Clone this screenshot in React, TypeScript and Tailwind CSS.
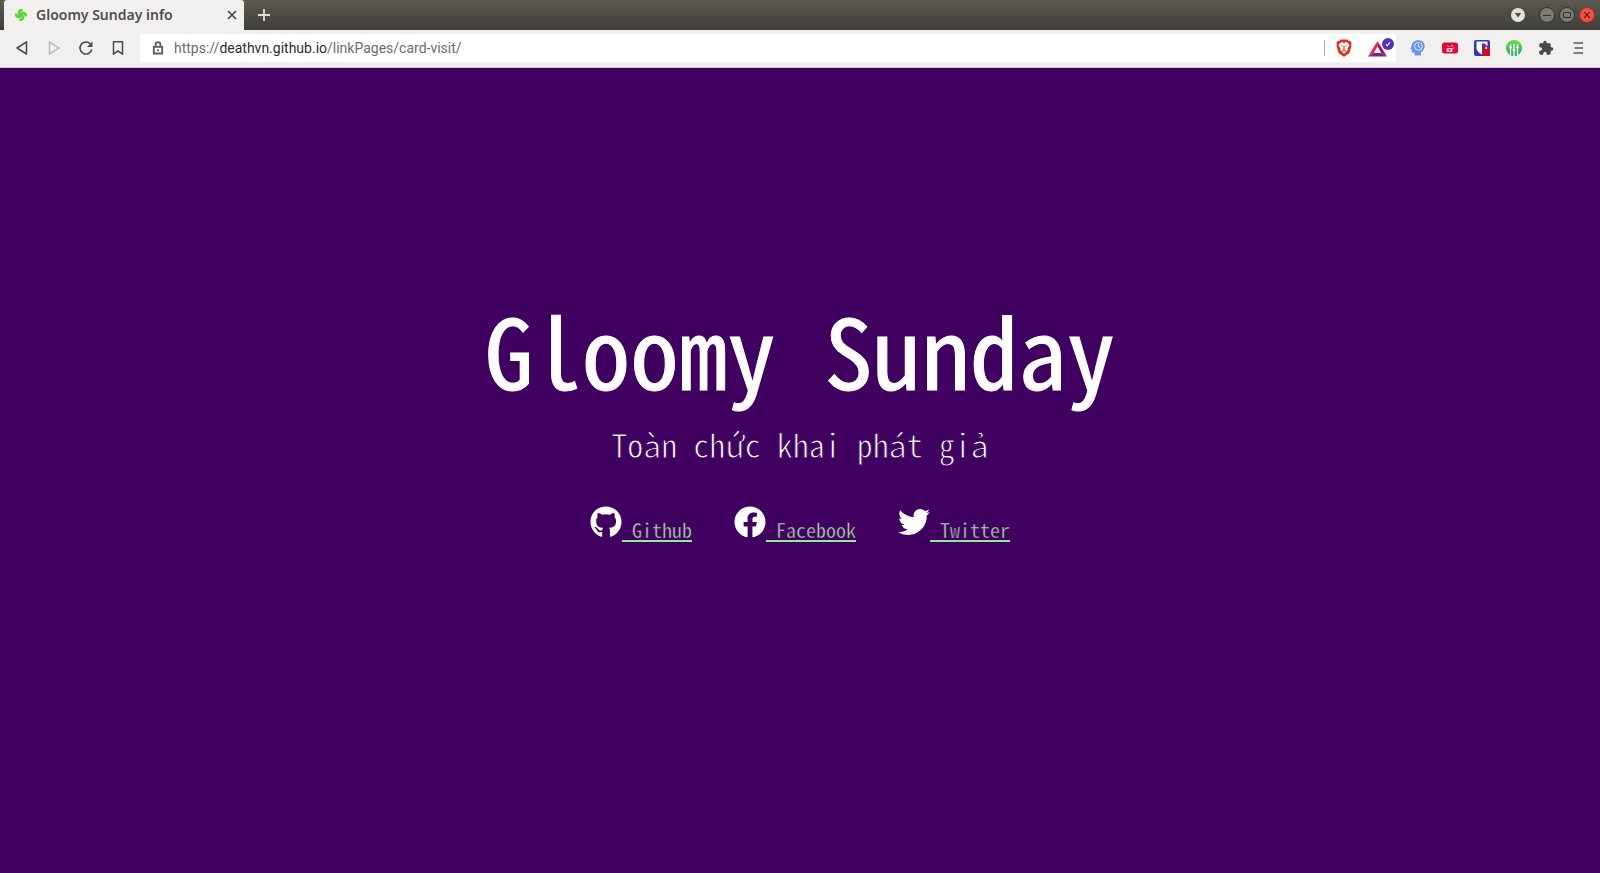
import React from "react";

const links = [
  {
    label: "Github",
    href: "https://github.com/",
    viewBox: "0 0 496 512",
    path: "M165.900 397.400c0 2-2.300 3.600-5.200 3.600-3.300.3-5.600-1.300-5.600-3.600 0-2 2.300-3.600 5.200-3.600 3-.3 5.600 1.300 5.600 3.600zm-31.100-4.500c-.7 2 1.300 4.300 4.300 4.900 2.600 1 5.600 0 6.200-2s-1.300-4.300-4.300-5.200c-2.600-.7-5.500.3-6.200 2.300zm44.200-1.700c-2.900.7-4.900 2.600-4.600 4.900.3 2 2.900 3.300 5.900 2.600 2.900-.7 4.900-2.600 4.600-4.600-.3-1.900-3-3.200-5.900-2.900zM244.800 8C106.100 8 0 113.300 0 252c0 110.900 69.800 205.800 169.500 239.200 12.800 2.300 17.300-5.600 17.300-12.100 0-6.200-.3-40.400-.3-61.400 0 0-70 15-84.700-29.800 0 0-11.400-29.100-27.800-36.600 0 0-22.900-15.700 1.600-15.400 0 0 24.900 2 38.600 25.800 21.900 38.600 58.600 27.500 72.900 20.900 2.300-16 8.800-27.100 16-33.700-55.900-6.200-112.300-14.300-112.300-110.500 0-27.500 7.600-41.300 23.600-58.900-2.600-6.500-11.100-33.300 2.600-67.900 20.900-6.500 69 27 69 27 20-5.600 41.500-8.500 62.800-8.500s42.800 2.900 62.800 8.500c0 0 48.100-33.600 69-27 13.700 34.700 5.200 61.400 2.600 67.900 16 17.700 25.800 31.500 25.800 58.900 0 96.500-58.900 104.200-114.800 110.500 9.200 7.900 17 22.900 17 46.400 0 33.700-.3 75.400-.3 83.600 0 6.500 4.600 14.400 17.300 12.100C428.200 457.800 496 362.900 496 252 496 113.300 383.500 8 244.800 8z",
  },
  {
    label: "Facebook",
    href: "https://www.facebook.com/",
    viewBox: "0 0 512 512",
    path: "M504 256C504 119 393 8 256 8S8 119 8 256c0 123.780 90.690 226.380 209.250 245V327.690h-63V256h63v-54.640c0-62.150 37-96.480 93.670-96.480 27.140 0 55.520 4.840 55.520 4.840v61h-31.280c-30.800 0-40.410 19.120-40.410 38.730V256h68.780l-11 71.690h-57.780V501C413.310 482.380 504 379.780 504 256z",
  },
  {
    label: "Twitter",
    href: "https://twitter.com/",
    viewBox: "0 0 512 512",
    path: "M459.370 151.716c.325 4.548.325 9.097.325 13.645 0 138.720-105.583 298.558-298.558 298.558-59.452 0-114.680-17.219-161.137-47.106 8.447.974 16.568 1.299 25.340 1.299 49.055 0 94.213-16.568 130.274-44.832-46.132-.975-84.792-31.188-98.112-72.772 6.498.974 12.995 1.624 19.818 1.624 9.421 0 18.843-1.300 27.614-3.573-48.081-9.747-84.143-51.980-84.143-102.985v-1.299c13.969 7.797 30.214 12.670 47.431 13.319-28.264-18.843-46.781-51.005-46.781-87.391 0-19.492 5.197-37.360 14.294-52.954 51.655 63.675 129.300 105.258 216.365 109.807-1.624-7.797-2.599-15.918-2.599-24.040 0-57.828 46.782-104.934 104.934-104.934 30.213 0 57.502 12.670 76.670 33.137 23.715-4.548 46.456-13.320 66.599-25.340-7.798 24.366-24.366 44.833-46.132 57.827 21.117-2.273 41.584-8.122 60.426-16.243-14.292 20.791-32.161 39.308-52.628 54.253z",
  },
];

function TabStrip() {
  return (
    <header className="flex h-[30px] items-stretch bg-linear-to-b from-[#5c5950] to-[#3f3d37] pl-1 pr-[5px]">
      <div className="flex w-60 items-center rounded-t-[3px] bg-[#f2f0ee] pl-[10px] pr-[6px]">
        <svg viewBox="0 0 14 14" className="mr-2 size-[14px]" fill="none" stroke="#5bd640" strokeWidth="2.800">
          <path d="M7 8C4.500 6 4 2.200 8.500 2.200" />
          <path d="M7 8C4.500 6 4 2.200 8.500 2.200" transform="rotate(90 7 7)" />
          <path d="M7 8C4.500 6 4 2.200 8.500 2.200" transform="rotate(180 7 7)" />
          <path d="M7 8C4.500 6 4 2.200 8.500 2.200" transform="rotate(270 7 7)" />
        </svg>
        <span className="flex-1 whitespace-nowrap font-['Noto_Sans',sans-serif] text-[14px] leading-5 font-semibold text-[#4f4f4f]">
          Gloomy Sunday info
        </span>
        <button aria-label="Close tab" className="grid size-3 place-items-center">
          <svg viewBox="0 0 12 12" className="size-3" stroke="#454545" strokeWidth="1.600">
            <path d="M2 2l8 8M10 2l-8 8" />
          </svg>
        </button>
      </div>
      <button aria-label="New tab" className="ml-3 grid w-4 place-items-center">
        <svg viewBox="0 0 12 12" className="size-3" stroke="#deddd9" strokeWidth="1.800">
          <path d="M6 0v12M0 6h12" />
        </svg>
      </button>
      <div className="ml-auto flex items-center gap-1">
        <button aria-label="Search tabs" className="mr-[10px]">
          <svg viewBox="0 0 14 14" className="size-[14px]">
            <circle cx="7" cy="7" r="7" fill="#e4e2de" />
            <path d="M3.800 5h6.400L7 9.400z" fill="#504e48" />
          </svg>
        </button>
        <button aria-label="Minimize">
          <svg viewBox="0 0 16 16" className="size-4">
            <circle cx="8" cy="8" r="7.500" fill="#7c7a73" stroke="#34322d" />
            <path d="M4 8.500h8" stroke="#34322d" />
          </svg>
        </button>
        <button aria-label="Maximize">
          <svg viewBox="0 0 16 16" className="size-4">
            <circle cx="8" cy="8" r="7.500" fill="#7c7a73" stroke="#34322d" />
            <path d="M4.500 5.500h7v5h-7z" fill="none" stroke="#34322d" />
          </svg>
        </button>
        <button aria-label="Close window">
          <svg viewBox="0 0 16 16" className="size-4">
            <circle cx="8" cy="8" r="7.500" fill="#f4503f" stroke="#8a3326" />
            <path d="M5.200 5.200l5.600 5.600M10.800 5.200l-5.600 5.600" stroke="#4f2018" strokeWidth="1.200" />
          </svg>
        </button>
      </div>
    </header>
  );
}

function Toolbar() {
  return (
    <div className="flex h-[38px] items-center border-b border-[#d5d0d8] bg-[#f2f0ee] px-[14px] pb-[2px]">
      <div className="flex items-center gap-4">
        <button aria-label="Back">
          <svg viewBox="0 0 16 16" className="size-4" fill="none" stroke="#4a4a4a" strokeWidth="1.500" strokeLinejoin="round">
            <path d="M12.500 2v12L3 8z" />
          </svg>
        </button>
        <button aria-label="Forward">
          <svg viewBox="0 0 16 16" className="size-4" fill="none" stroke="#b4b2b0" strokeWidth="1.400" strokeLinejoin="round">
            <path d="M3.500 2v12L13 8z" />
          </svg>
        </button>
        <button aria-label="Reload">
          <svg viewBox="0 0 16 16" className="size-4" fill="none" stroke="#4a4a4a" strokeWidth="1.600">
            <path d="M13.800 9.500A6 6 0 1 1 12.300 3.800" />
            <path d="M14.500 1.500v5.500H9z" fill="#4a4a4a" stroke="none" />
          </svg>
        </button>
        <button aria-label="Bookmark">
          <svg viewBox="0 0 16 16" className="size-4" fill="none" stroke="#4a4a4a" strokeWidth="1.500" strokeLinejoin="round">
            <path d="M3.500 1.800h9v12.400L8 10.800l-4.500 3.400z" />
          </svg>
        </button>
      </div>
      <div className="ml-[14px] flex h-7 flex-1 items-center rounded-[3px] bg-white pl-3 pr-[2px]">
        <svg viewBox="0 0 12 14" className="mr-[10px] h-[14px] w-3" fill="none" stroke="#5a5a5a" strokeWidth="1.800">
          <path d="M1.800 5.800h8.400v6.700H1.800zM3.600 5.800V3.600a2.400 2.400 0 0 1 4.800 0v2.200" />
          <circle cx="6" cy="9.200" r="1" fill="#5a5a5a" stroke="none" />
        </svg>
        <a
          href="https://deathvn.github.io/linkPages/card-visit/"
          className="flex-1 whitespace-nowrap font-[Roboto,sans-serif] text-[14px] leading-5 text-[#6c6c6e]"
        >
          https://<span className="text-[#2c2c2e]">deathvn.github.io</span>/linkPages/card-visit/
        </a>
        <div className="mr-[11px] h-4 w-px bg-[#a9a9ad]" />
        <button aria-label="Brave Shields" className="mr-4">
          <svg viewBox="0 0 16 18" className="h-[18px] w-4">
            <path d="M4.500.5h7l1.200 1.400 1.600-.1L15.600 4l-.5 1.600.4 1.500-2.100 7.200L8 17.800l-5.400-3.500L.5 7.100l.4-1.500L.4 4l1.300-2.200 1.600.1z" fill="#e5301d" />
            <path d="M4.800 3.200L8 3.700l3.200-.5 2.300 2.800-1.900 3.300.2 1.800-2.300 1.800L8 15l-1.500-2.100-2.300-1.800.2-1.800L2.500 6z" fill="#fff" />
            <path d="M4.500 6.200l2.200.6-.4 1zM11.500 6.200l-2.200.6.4 1zM7.500 7h1l.2 3L8 10.800 7.300 10zM5.800 11.300L8 10.700l2.200.6L8 12.500z" fill="#e5301d" />
          </svg>
        </button>
        <button aria-label="Brave Rewards">
          <svg viewBox="0 0 26 20" className="h-5 w-[26px]">
            <path d="M9.500 3L0 18.500l5.800-3.500L9.500 8.500z" fill="#ef2046" />
            <path d="M9.500 3L19 18.500 13.200 15 9.500 8.500z" fill="#a01a76" />
            <path d="M0 18.500h19L13.200 15H5.800z" fill="#74257f" />
            <circle cx="20" cy="6" r="6" fill="#5035bd" />
            <path d="M18 6.300l1.300 1.300 2.600-3.200" fill="none" stroke="#fff" strokeWidth="1.100" />
          </svg>
        </button>
      </div>
      <div className="ml-[14px] flex items-center gap-4">
        <button aria-label="History extension">
          <svg viewBox="0 0 16 16" className="size-4">
            <path d="M8.500.3C4.500.1 1.700 2.700 1.700 5.700L.5 8.900l1.300.6v3h2.500l.5 3.100H11v-3.300c5.700-3.700 4.700-11.800-2.500-12z" fill="#6196e8" />
            <circle cx="8.500" cy="6.300" r="3.900" fill="none" stroke="#eaf2ff" />
            <path d="M8.500 4v2.500l1.800 1.200" fill="none" stroke="#fff" />
          </svg>
        </button>
        <button aria-label="Video extension">
          <svg viewBox="0 0 16 16" className="size-4">
            <rect x="0" y="2.500" width="16" height="11" rx="2.500" fill="#d90b35" />
            <path d="M5 8.500h5v3H5zM5.500 5.500l1.500 1.500M8.500 6.500l2.500-1.500M10.500 8.500l1.500-1" fill="#f7cdd5" stroke="#f7cdd5" strokeWidth="1" />
            <circle cx="7.500" cy="10" r="1" fill="#d90b35" />
          </svg>
        </button>
        <button aria-label="Password manager">
          <svg viewBox="0 0 16 16" className="size-4">
            <rect width="16" height="16" rx="2" fill="#2b38c9" />
            <path d="M2.500 1.500h11V8c0 3-2.500 5-5.500 6.500C5 13 2.500 11 2.500 8z" fill="#fff" />
            <path d="M8 3.500h3.500V8c0 2-1.500 3.500-3.500 4.500z" fill="#2b38c9" />
            <path d="M8 9h8v7H8z" fill="#cc1029" />
            <path d="M10 9.500V8a2 2 0 0 1 4 0v1.500" fill="none" stroke="#cc1029" strokeWidth="1.300" />
          </svg>
        </button>
        <button aria-label="Equalizer extension">
          <svg viewBox="0 0 16 16" className="size-4">
            <defs>
              <linearGradient id="eq" x1="0" y1="0" x2="0" y2="1">
                <stop stopColor="#72dc3f" />
                <stop offset="1" stopColor="#17a374" />
              </linearGradient>
            </defs>
            <circle cx="8" cy="8" r="8" fill="url(#eq)" />
            <path d="M4.500 4v11M8 4v12M11.500 4v11M3 7.500h3M6.500 10h3M10 7.500h3" stroke="#fff" strokeWidth="1.300" />
          </svg>
        </button>
        <button aria-label="Extensions">
          <svg viewBox="0 0 24 24" className="size-4" fill="#474747">
            <path d="M20.500 11H19V7c0-1.100-.9-2-2-2h-4V3.500a2.500 2.500 0 0 0-5 0V5H4c-1.100 0-2 .9-2 2v3.800h1.500a2.700 2.700 0 0 1 0 5.400H2V20c0 1.100.9 2 2 2h3.800v-1.500a2.700 2.700 0 0 1 5.400 0V22H17c1.100 0 2-.9 2-2v-4h1.500a2.500 2.500 0 0 0 0-5z" />
          </svg>
        </button>
        <button aria-label="Menu">
          <svg viewBox="0 0 16 16" className="size-4" stroke="#5a5a5a" strokeWidth="1.600">
            <path d="M3.500 3h9.500M4.500 8H13M3.500 13H13" />
          </svg>
        </button>
      </div>
    </div>
  );
}

export default function App() {
  return (
    <div className="flex min-h-screen flex-col bg-[#400060]">
      <TabStrip />
      <Toolbar />
      <main className="flex flex-1 flex-col items-center justify-center pb-27 font-['Noto_Sans_Mono_CJK_JP','Liberation_Mono',monospace] text-white">
        <h1 className="text-[97px] leading-[112px] font-normal [-webkit-text-stroke:1px_white] [stroke-linejoin:round]">
          Gloomy Sunday
        </h1>
        <p className="mt-3 text-[32px] leading-[56px] [-webkit-text-stroke:1px_#400060]">Toàn chức khai phát giả</p>
        <nav className="mt-[34px] flex gap-[42px]">
          {links.map(({ label, href, viewBox, path }) => (
            <a key={label} href={href} className="flex items-end">
              <svg viewBox={viewBox} className="mb-1 size-8" fill="#fff">
                <path d={path} />
              </svg>
              <span className="text-[20px] leading-6 whitespace-pre text-[#bfe8b8] underline decoration-[#90ee90] decoration-2 underline-offset-2 [-webkit-text-stroke:1px_#40006080]">
                {" " + label}
              </span>
            </a>
          ))}
        </nav>
      </main>
    </div>
  );
}
